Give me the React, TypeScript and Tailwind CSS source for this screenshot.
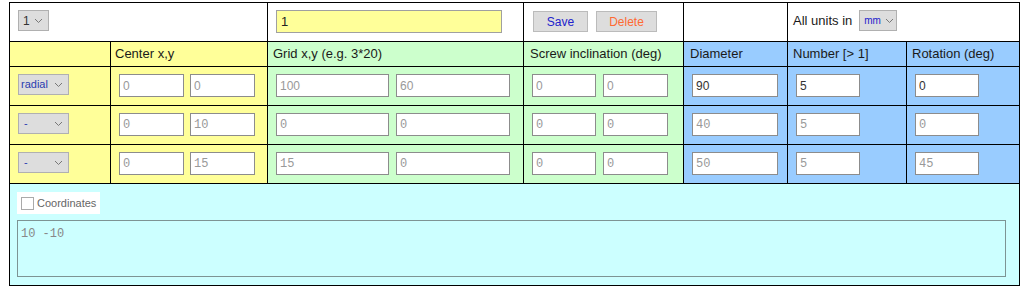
import React from 'react'

type Cell = { v: string; w: string; dark?: boolean }

const Chevron: React.FC = () => (
  <svg width="9" height="6" viewBox="0 0 9 6" className="shrink-0">
    <path d="M1 1 L4.5 4.5 L8 1" fill="none" stroke="#777" strokeWidth="1" />
  </svg>
)

const Select: React.FC<{ label: string; w: string; color?: string; text?: string; pad?: string }> = ({
  label,
  w,
  color = 'text-[#333]',
  text = 'text-[12px]',
  pad = 'pl-[4px] pr-[5px]',
}) => (
  <div className={`${w} h-[21px] flex items-center justify-between ${pad} bg-[#dddddd] border border-[#b0b0b0] ${color} ${text}`}>
    <span>{label}</span>
    <Chevron />
  </div>
)

const Field: React.FC<{ c: Cell; mono?: boolean }> = ({ c, mono }) => (
  <input
    readOnly
    value={c.v}
    className={`${c.w} h-[23px] bg-white border border-[#8c8c8c] px-[3px] text-[12px] outline-none ${c.dark ? 'text-[#333]' : 'text-[#999]'} ${mono ? "font-['Liberation_Mono',monospace]" : ''}`}
  />
)

const rows = [
  {
    mode: 'radial',
    center: ['0', '0'],
    grid: ['100', '60'],
    screw: ['0', '0'],
    diameter: '90',
    number: '5',
    rotation: '0',
    first: true,
  },
  { mode: '-', center: ['0', '10'], grid: ['0', '0'], screw: ['0', '0'], diameter: '40', number: '5', rotation: '0', first: false },
  { mode: '-', center: ['0', '15'], grid: ['15', '0'], screw: ['0', '0'], diameter: '50', number: '5', rotation: '45', first: false },
]

const App: React.FC = () => {
  return (
    <div className="w-[1026px] h-[293px] bg-white font-['Liberation_Sans',Arial,sans-serif] text-[13px] text-[#1a1a1a] pt-[2px] pl-[9px]">
      <div className="w-[1011px] grid grid-cols-[100px_156px_255px_159px_103px_118px_112px] grid-rows-[38px_24px_38px_38px_38px_101px] gap-px bg-black border border-black">
        {/* top row */}
        <div className="col-span-2 bg-white pl-[8px] pt-[7px]">
          <Select label="1" w="w-[31px]" pad="pl-[4px] pr-[5px]" />
        </div>
        <div className="bg-white pl-[8px] pt-[7px]">
          <input
            readOnly
            value="1"
            className="w-[226px] h-[23px] bg-[#ffff99] border border-[#a0a0a0] px-[4px] text-[13px] text-[#222] outline-none"
          />
        </div>
        <div className="bg-white pl-[9px] pt-[8px] flex items-start gap-[8px]">
          <button className="w-[55px] h-[21px] bg-[#dddddd] border border-[#bbbbbb] text-[12px] text-[#2222cc]">Save</button>
          <button className="w-[61px] h-[21px] bg-[#dddddd] border border-[#bbbbbb] text-[12px] text-[#ff6a33]">Delete</button>
        </div>
        <div className="bg-white" />
        <div className="col-span-2 bg-white pl-[5px] pt-[7px] flex items-start gap-[7px]">
          <span className="leading-[21px]">All units in</span>
          <Select label="mm" w="w-[38px]" color="text-[#2222cc]" text="text-[10px]" pad="pl-[4px] pr-[2px]" />
        </div>

        {/* header row */}
        <div className="bg-[#ffff99]" />
        <div className="bg-[#ffff99] pl-[4px] flex items-center">Center x,y</div>
        <div className="bg-[#ccffcc] pl-[5px] flex items-center">Grid x,y (e.g. 3*20)</div>
        <div className="bg-[#ccffcc] pl-[6px] flex items-center">Screw inclination (deg)</div>
        <div className="bg-[#99ccff] pl-[6px] flex items-center">Diameter</div>
        <div className="bg-[#99ccff] pl-[5px] flex items-center">Number [&gt; 1]</div>
        <div className="bg-[#99ccff] pl-[5px] flex items-center">Rotation (deg)</div>

        {/* data rows */}
        {rows.map((r, i) => {
          const mono = !r.first
          return (
            <React.Fragment key={i}>
              <div className="bg-[#ffff99] pl-[8px] pt-[7px]">
                <Select
                  label={r.mode}
                  w="w-[51px]"
                  color="text-[#2a3cb0]"
                  text="text-[11px]"
                  pad={r.first ? 'pl-[2px] pr-[5px]' : 'pl-[5px] pr-[5px]'}
                />
              </div>
              <div className="bg-[#ffff99] pl-[8px] pt-[7px] flex items-start gap-[6px]">
                <Field c={{ v: r.center[0], w: 'w-[65px]' }} mono={mono} />
                <Field c={{ v: r.center[1], w: 'w-[65px]' }} mono={mono} />
              </div>
              <div className="bg-[#ccffcc] pl-[8px] pt-[7px] flex items-start gap-[7px]">
                <Field c={{ v: r.grid[0], w: 'w-[113px]' }} mono={mono} />
                <Field c={{ v: r.grid[1], w: 'w-[114px]' }} mono={mono} />
              </div>
              <div className="bg-[#ccffcc] pl-[8px] pt-[7px] flex items-start gap-[7px]">
                <Field c={{ v: r.screw[0], w: 'w-[64px]' }} mono={mono} />
                <Field c={{ v: r.screw[1], w: 'w-[65px]' }} mono={mono} />
              </div>
              <div className="bg-[#99ccff] pl-[8px] pt-[7px]">
                <Field c={{ v: r.diameter, w: 'w-[86px]', dark: r.first }} mono={mono} />
              </div>
              <div className="bg-[#99ccff] pl-[8px] pt-[7px]">
                <Field c={{ v: r.number, w: 'w-[64px]', dark: r.first }} mono={mono} />
              </div>
              <div className="bg-[#99ccff] pl-[8px] pt-[7px]">
                <Field c={{ v: r.rotation, w: 'w-[64px]', dark: r.first }} mono={mono} />
              </div>
            </React.Fragment>
          )
        })}

        {/* coordinates */}
        <div className="col-span-7 bg-[#ccffff] pl-[7px] pt-[8px] flex flex-col gap-[6px]">
          <label className="w-[83px] h-[22px] bg-white flex items-center gap-[3px] pl-[4px] text-[11px] text-[#666]">
            <span className="w-[13px] h-[13px] border border-[#aaaaaa] bg-white" />
            Coordinates
          </label>
          <textarea
            readOnly
            value="10 -10"
            className="w-[989px] h-[57px] bg-[#ccffff] border border-[#7d9494] px-[3px] py-[4px] resize-none outline-none text-[12px] text-[#888] font-['Liberation_Mono',monospace]"
          />
        </div>
      </div>
    </div>
  )
}

export default App
